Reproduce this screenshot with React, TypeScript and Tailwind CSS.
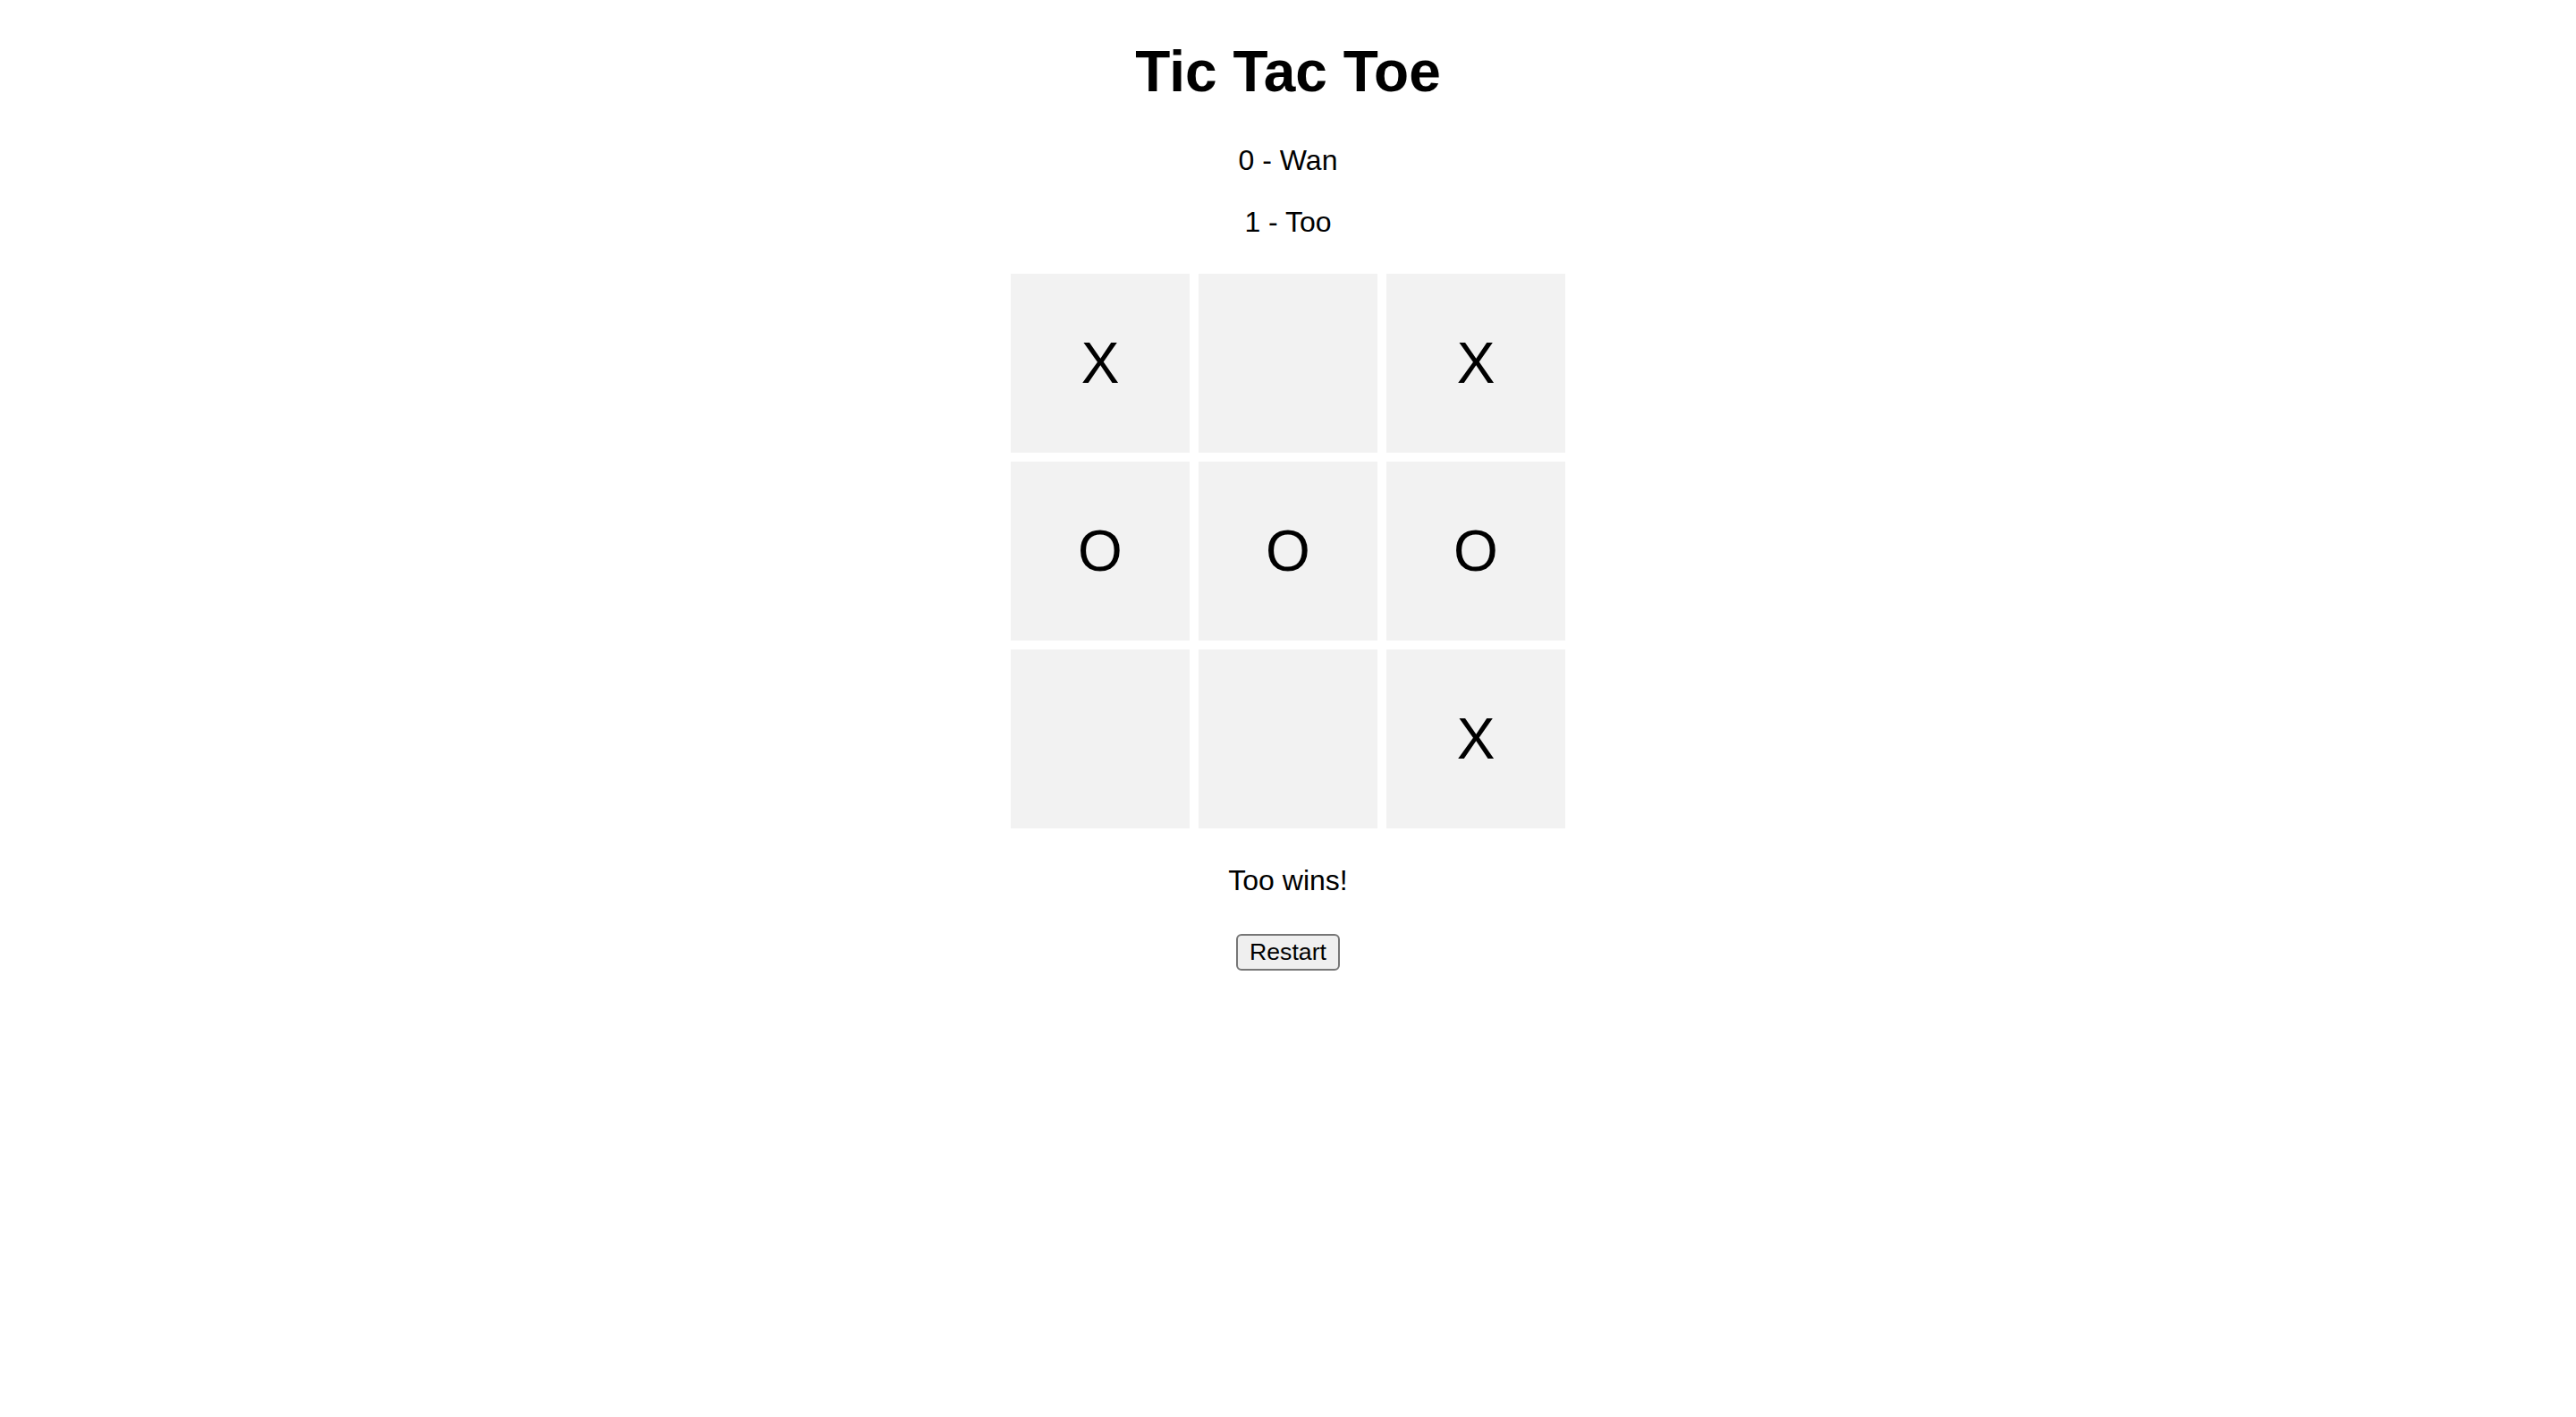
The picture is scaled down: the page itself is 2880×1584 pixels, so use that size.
import React, { useState } from 'react';

const names = ['Wan', 'Too'];

// board as it stands in the picture
const initialBoard: (string | null)[] = ['X', null, 'X', 'O', 'O', 'O', null, null, 'X'];

const lines = [
	[0, 1, 2],
	[3, 4, 5],
	[6, 7, 8],
	[0, 3, 6],
	[1, 4, 7],
	[2, 5, 8],
	[0, 4, 8],
	[2, 4, 6],
];

function getWinner(board: (string | null)[]) {
	for (const [a, b, c] of lines) {
		if (board[a] && board[a] === board[b] && board[a] === board[c]) return board[a];
	}
	return null;
}

function Cell({ value, onClick }: { value: string | null; onClick: () => void }) {
	return (
		<div
			className="flex h-[200px] w-[200px] cursor-pointer items-center justify-center bg-[#f2f2f2] text-[64px] leading-none"
			onClick={onClick}
		>
			{value}
		</div>
	);
}

export default function App() {
	const [board, setBoard] = useState(initialBoard);
	const [turn, setTurn] = useState(0);

	const winner = getWinner(board);
	const winnerName = winner ? names[winner === 'X' ? 0 : 1] : null;

	const play = (i: number) => {
		if (board[i] || winner) return;
		const next = [...board];
		next[i] = turn === 0 ? 'X' : 'O';
		setBoard(next);
		setTurn(turn === 0 ? 1 : 0);
	};

	const restart = () => {
		setBoard(Array(9).fill(null));
		setTurn(0);
	};

	return (
		<div className="flex min-h-screen flex-col items-center bg-white font-['Liberation_Sans',Arial,sans-serif] text-black">
			<h1 className="mt-[43px] text-[64px] font-bold leading-[74px]">Tic Tac Toe</h1>

			{/* players */}
			<p className="mt-[44px] text-[32px] leading-[37px]">0 - {names[0]}</p>
			<p className="mt-[32px] text-[32px] leading-[37px]">1 - {names[1]}</p>

			<div className="mt-[39px] grid grid-cols-[repeat(3,200px)] gap-[10px]">
				{board.map((value, i) => (
					<Cell key={i} value={value} onClick={() => play(i)} />
				))}
			</div>

			<p className="mt-[40px] text-[32px] leading-[37px]">
				{winnerName ? `${winnerName} wins!` : `${names[turn]}'s turn`}
			</p>

			<button
				className="mt-[41px] flex h-[41px] w-[116px] items-center justify-center rounded-[6px] border-2 border-[#767676] bg-[#efefef] pb-[1px] text-[26.67px] leading-none text-black"
				onClick={restart}
			>
				Restart
			</button>
		</div>
	);
}
